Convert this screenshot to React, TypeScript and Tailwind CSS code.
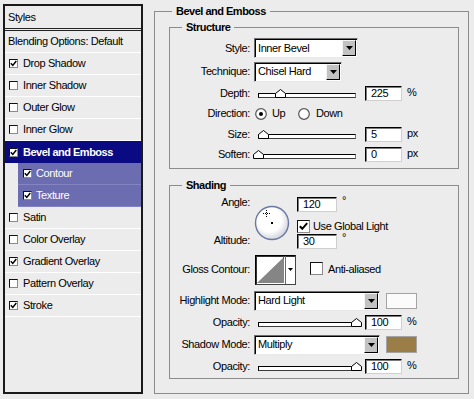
import React from "react";

function Check({ checked, big }: { checked?: boolean; big?: boolean }) {
  return (
    <span
      className={
        (big ? "w-[13px] h-[13px] " : "w-[9px] h-[9px] ") +
        "shrink-0 inline-flex items-center justify-center bg-white border border-t-[#111] border-l-[#111] border-r-[#8a8a8a] border-b-[#8a8a8a]"
      }
    >
      {checked &&
        (big ? (
          <svg width="11" height="11" viewBox="0 0 11 11">
            <path d="M1.8 5.2 L4.3 7.8 L9.2 2.2" fill="none" stroke="#000" strokeWidth="2" />
          </svg>
        ) : (
          <svg width="7" height="7" viewBox="0 0 7 7">
            <path d="M0.8 3.3 L2.8 5.4 L6.3 1" fill="none" stroke="#000" strokeWidth="1.5" />
          </svg>
        ))}
    </span>
  );
}

function Radio({ on }: { on?: boolean }) {
  return (
    <svg width="12" height="12" viewBox="0 0 12 12" className="shrink-0">
      <circle cx="6" cy="6" r="5.3" fill="#fff" stroke="#555" strokeWidth="1.2" />
      {on && <circle cx="6" cy="6" r="2" fill="#000" />}
    </svg>
  );
}

function Select({ value, w }: { value: string; w: string }) {
  return (
    <div
      className={
        w +
        " h-[20px] bg-white border border-t-[#6e6e6e] border-l-[#6e6e6e] border-r-[#e8e8e8] border-b-[#e8e8e8] shadow-[inset_1px_1px_0_#000] flex items-center"
      }
    >
      <span className="pl-[3px] flex-1 whitespace-nowrap">{value}</span>
      <span className="w-[14px] h-[16px] mr-[1px] bg-[#c2c2c2] border border-t-[#f4f4f4] border-l-[#f4f4f4] border-r-[#000] border-b-[#000] flex items-center justify-center">
        <svg width="7" height="4" viewBox="0 0 7 4">
          <path d="M0 0h7L3.5 4z" fill="#000" />
        </svg>
      </span>
    </div>
  );
}

function Slider({ thumb }: { thumb: string }) {
  return (
    <div className="relative ml-[4px] w-[98px] h-[9px] flex items-end">
      <div className="w-full h-[5px] bg-white border border-t-[#000] border-l-[#000] border-r-[#7a7a7a] border-b-[#3a3a3a]" />
      <svg className={"absolute bottom-0 " + thumb} width="11" height="9" viewBox="0 0 11 9">
        <path d="M0.5 8.5 L0.5 4.5 L5.5 0.5 L10.5 4.5 L10.5 8.5 Z" fill="#fff" stroke="#000" strokeWidth="1" />
      </svg>
    </div>
  );
}

function Num({ v, w }: { v: string; w: string }) {
  return (
    <div
      className={
        w +
        " h-[15px] bg-white border border-t-[#000] border-l-[#000] border-r-[#cfcfcf] border-b-[#cfcfcf] shadow-[inset_1px_1px_0_#7a7a7a] flex items-center pl-[5px] leading-none"
      }
    >
      {v}
    </div>
  );
}

function Row({ label, h, children }: { label: string; h: string; children?: React.ReactNode }) {
  return (
    <div className={"flex items-center " + h}>
      <div className="w-[80px] text-right whitespace-nowrap">{label}</div>
      <div className="ml-[4px] flex items-center">{children}</div>
    </div>
  );
}

function SliderRow({ label, h, thumb, v, unit }: { label: string; h: string; thumb: string; v: string; unit: string }) {
  return (
    <Row label={label} h={h}>
      <Slider thumb={thumb} />
      <div className="ml-[9px]">
        <Num v={v} w="w-[37px]" />
      </div>
      <span className="ml-[5px] -mt-[1px]">{unit}</span>
    </Row>
  );
}

const items: { label: string; checked: boolean; kind: "n" | "sel" | "sub" }[] = [
  { label: "Drop Shadow", checked: true, kind: "n" },
  { label: "Inner Shadow", checked: false, kind: "n" },
  { label: "Outer Glow", checked: false, kind: "n" },
  { label: "Inner Glow", checked: false, kind: "n" },
  { label: "Bevel and Emboss", checked: true, kind: "sel" },
  { label: "Contour", checked: true, kind: "sub" },
  { label: "Texture", checked: true, kind: "sub" },
  { label: "Satin", checked: false, kind: "n" },
  { label: "Color Overlay", checked: false, kind: "n" },
  { label: "Gradient Overlay", checked: true, kind: "n" },
  { label: "Pattern Overlay", checked: false, kind: "n" },
  { label: "Stroke", checked: true, kind: "n" },
];

export default function App() {
  return (
    <div className="w-[474px] h-[399px] bg-[#ececec] flex items-start overflow-hidden text-black text-[11px] leading-[13px] tracking-[-0.4px] font-['Liberation_Sans',Arial,sans-serif]">
      {/* Left styles list */}
      <div className="mt-[4px] ml-[3px] w-[140px] h-[390px] shrink-0 border-2 border-[#1a1a1a] bg-[#ececec] flex flex-col">
        <div className="h-[25px] border-b-[3px] border-double border-[#222] flex items-center pl-[3px]">Styles</div>
        <div className="h-[22px] border-b border-white flex items-center pl-[3px]">Blending Options: Default</div>
        {items.map((it) =>
          it.kind === "sel" ? (
            <div key={it.label} className="h-[22px] bg-[#0a0a82] flex items-center pl-[4px] text-white font-bold tracking-[-0.5px]">
              <Check checked={it.checked} />
              <span className="ml-[5px]">{it.label}</span>
            </div>
          ) : it.kind === "sub" ? (
            <div key={it.label} className="h-[22px] ml-[13px] bg-[#6c6cb0] border-b border-[#8484c2] flex items-center pl-[5px] text-white">
              <Check checked={it.checked} />
              <span className="ml-[4px]">{it.label}</span>
            </div>
          ) : (
            <div key={it.label} className="h-[22px] border-b border-white flex items-center pl-[4px]">
              <Check checked={it.checked} />
              <span className="ml-[5px]">{it.label}</span>
            </div>
          )
        )}
      </div>

      {/* Right: Bevel and Emboss group */}
      <fieldset className="ml-[11px] mt-[5px] w-[315px] h-[389px] shrink-0 border border-[#8c8c8c]">
        <legend className="ml-[17px] px-[4px] font-bold tracking-[-0.5px] leading-[13px]">Bevel and Emboss</legend>

        <fieldset className="ml-[14px] mt-[3px] w-[290px] h-[148px] border border-[#8c8c8c]">
          <legend className="ml-[12px] px-[4px] font-bold tracking-[-0.5px] leading-[13px]">Structure</legend>
          <div className="pt-[2px]">
            <Row label="Style:" h="h-[24px]">
              <Select value="Inner Bevel" w="w-[104px]" />
            </Row>
            <Row label="Technique:" h="h-[23px]">
              <Select value="Chisel Hard" w="w-[88px]" />
            </Row>
            <SliderRow label="Depth:" h="h-[20px]" thumb="left-[17px]" v="225" unit="%" />
            <Row label="Direction:" h="h-[21px]">
              <span className="ml-[1px]">
                <Radio on />
              </span>
              <span className="ml-[5px] w-[26px]">Up</span>
              <Radio />
              <span className="ml-[6px]">Down</span>
            </Row>
            <SliderRow label="Size:" h="h-[20px]" thumb="left-[0px]" v="5" unit="px" />
            <SliderRow label="Soften:" h="h-[20px]" thumb="left-[-5px]" v="0" unit="px" />
          </div>
        </fieldset>

        <fieldset className="ml-[14px] mt-[10px] w-[290px] h-[200px] border border-[#8c8c8c]">
          <legend className="ml-[12px] px-[4px] font-bold tracking-[-0.5px] leading-[13px]">Shading</legend>
          <div className="pt-[3px]">
            <div className="flex items-start h-[56px]">
              <div className="w-[80px] text-right">
                <div className="h-[14px] leading-[14px]">Angle:</div>
                <div className="mt-[24px] h-[14px] leading-[14px]">Altitude:</div>
              </div>
              <svg className="ml-[4px] mt-[10px] shrink-0" width="36" height="36" viewBox="0 0 36 36">
                <defs>
                  <radialGradient id="dialg" cx="42%" cy="40%" r="60%">
                    <stop offset="60%" stopColor="#ffffff" />
                    <stop offset="100%" stopColor="#d4d6de" />
                  </radialGradient>
                </defs>
                <circle cx="18" cy="18" r="16.5" fill="url(#dialg)" stroke="#6a78a2" strokeWidth="1.4" />
                <rect x="12" y="5" width="1" height="1" fill="#000" />
                <rect x="12" y="7" width="1" height="1" fill="#000" />
                <rect x="12" y="9" width="1" height="1" fill="#000" />
                <rect x="12" y="11" width="1" height="1" fill="#000" />
                <rect x="9" y="8" width="1" height="1" fill="#000" />
                <rect x="11" y="8" width="1" height="1" fill="#000" />
                <rect x="13" y="8" width="1" height="1" fill="#000" />
                <rect x="15" y="8" width="1" height="1" fill="#000" />
                <rect x="17" y="17" width="2" height="2" fill="#000" />
              </svg>
              <div className="ml-[7px] flex flex-col">
                <div className="mt-[2px] flex items-start">
                  <Num v="120" w="w-[40px]" />
                  <span className="ml-[5px] -mt-[3px]">°</span>
                </div>
                <div className="mt-[8px] h-[13px] flex items-center">
                  <Check checked big />
                  <span className="ml-[3px]">Use Global Light</span>
                </div>
                <div className="mt-[1px] flex items-start">
                  <Num v="30" w="w-[40px]" />
                  <span className="ml-[5px] -mt-[3px]">°</span>
                </div>
              </div>
            </div>

            <Row label="Gloss Contour:" h="h-[37px]">
              <div className="ml-[1px] w-[41px] h-[30px] flex bg-white border border-t-[#000] border-l-[#000] border-r-[#444] border-b-[#444] shadow-[inset_1px_1px_0_#333]">
                <svg width="29" height="28" viewBox="0 0 29 28" className="shrink-0">
                  <path d="M1 27 L28 1 L28 27 Z" fill="#858585" />
                  <rect x="27" y="0" width="1" height="3" fill="#555" />
                </svg>
                <div className="w-px bg-[#6a6a6a]" />
                <div className="flex-1 flex items-center justify-center">
                  <svg width="5" height="3" viewBox="0 0 5 3">
                    <path d="M0 0h5L2.5 3z" fill="#000" />
                  </svg>
                </div>
              </div>
              <span className="ml-[14px]">
                <Check big />
              </span>
              <span className="ml-[5px]">Anti-aliased</span>
            </Row>

            <Row label="Highlight Mode:" h="h-[25px]">
              <Select value="Hard Light" w="w-[126px]" />
              <div className="ml-[6px] w-[31px] h-[16px] bg-[#fbfbfb] border border-[#a4a4a4]" />
            </Row>
            <SliderRow label="Opacity:" h="h-[18px]" thumb="left-[93px]" v="100" unit="%" />
            <Row label="Shadow Mode:" h="h-[27px]">
              <Select value="Multiply" w="w-[126px]" />
              <div className="ml-[6px] w-[31px] h-[17px] bg-[#9b7d48] border border-[#a4a4a4]" />
            </Row>
            <SliderRow label="Opacity:" h="h-[16px]" thumb="left-[93px]" v="100" unit="%" />
          </div>
        </fieldset>
      </fieldset>
    </div>
  );
}
